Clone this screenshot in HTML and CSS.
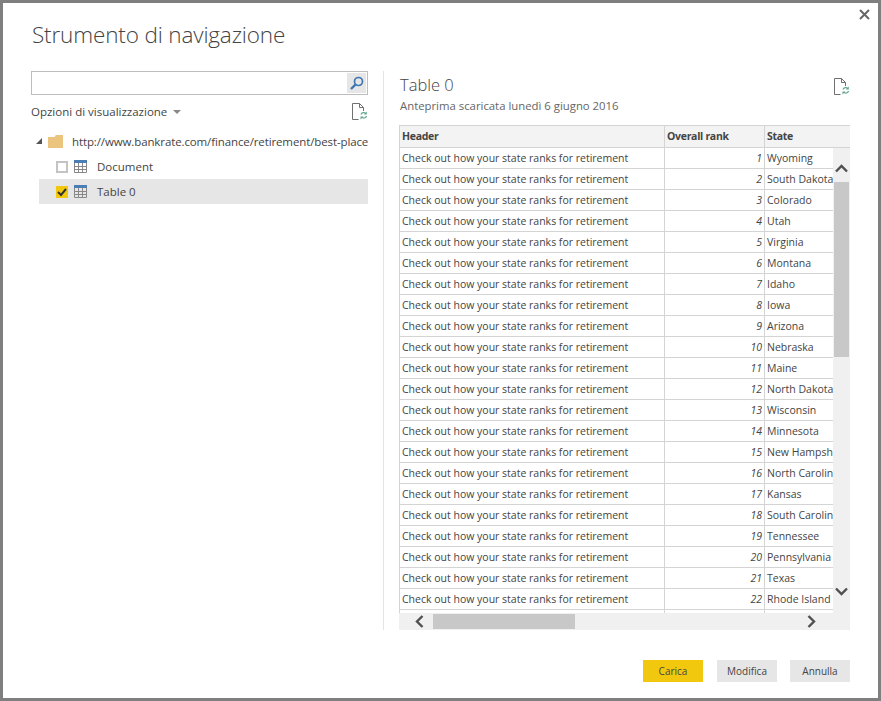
FILE: index.html
```html
<!DOCTYPE html>
<html lang="it">
<head>
    <meta charset="UTF-8">
    <title>Strumento di navigazione</title>
    <link rel="stylesheet" href="styles.css">
</head>
<body>
    <svg width="0" height="0" class="defs">
        <symbol id="doc-refresh" viewBox="0 0 16 17">
            <path d="M6.500 16.500H.5V.5h7l4 4v3.500M7.500.5v4h4" fill="none" stroke="#707070"/>
            <path d="M9 11.500a2.800 2.800 0 0 1 4.700-1M14.500 13a2.800 2.800 0 0 1-4.700 1.200" fill="none" stroke="#62a88e" stroke-width="1.200"/>
            <path d="M14.800 8.500v3h-3zM8.500 16.500v-3h3z" fill="#62a88e"/>
        </symbol>
        <symbol id="table-icon" viewBox="0 0 13 13">
            <rect width="13" height="3" fill="#4a7fb5"/>
            <path d="M.5 3v9.500h12V3M.5 6.500h12M.5 9.500h12M4.500 3v9.500M8.500 3v9.500" fill="none" stroke="#888"/>
        </symbol>
    </svg>

    <div class="dialog">
        <button class="close" aria-label="Chiudi">
            <svg width="11" height="11" viewBox="0 0 11 11"><path d="M1 1l9 9M10 1l-9 9" stroke="#666" stroke-width="2"/></svg>
        </button>
        <h1 class="title">Strumento di navigazione</h1>

        <div class="main">
            <div class="left">
                <div class="search">
                    <input type="text" class="search-input">
                    <span class="search-btn">
                        <svg width="14" height="14" viewBox="0 0 14 14">
                            <circle cx="8.500" cy="5.500" r="4" fill="none" stroke="#3d76b0" stroke-width="1.700"/>
                            <path d="M5.500 8.500L1 13" stroke="#3d76b0" stroke-width="2.400"/>
                        </svg>
                    </span>
                </div>
                <div class="options">
                    <span>Opzioni di visualizzazione</span>
                    <span class="caret"></span>
                    <svg class="refresh-icon" width="16" height="17"><use href="#doc-refresh"/></svg>
                </div>
                <div class="tree">
                    <div class="tree-root">
                        <span class="expander"></span>
                        <svg class="folder" width="15" height="13" viewBox="0 0 15 13">
                            <path d="M0 2h7V1l1-1h7v13H0z" fill="#ebc57f"/>
                        </svg>
                        <span class="url">http://www.bankrate.com/finance/retirement/best-place</span>
                    </div>
                    <div class="tree-item">
                        <span class="check"></span>
                        <svg width="13" height="13"><use href="#table-icon"/></svg>
                        <span>Document</span>
                    </div>
                    <div class="tree-item selected">
                        <span class="check checked">
                            <svg width="12" height="12" viewBox="0 0 12 12"><path d="M2 6l3 3 5-6" fill="none" stroke="#333" stroke-width="2"/></svg>
                        </span>
                        <svg width="13" height="13"><use href="#table-icon"/></svg>
                        <span>Table 0</span>
                    </div>
                </div>
            </div>

            <div class="right">
                <div class="preview-head">
                    <div>
                        <h2 class="preview-title">Table 0</h2>
                        <p class="preview-sub">Anteprima scaricata lunedì 6 giugno 2016</p>
                    </div>
                    <svg class="refresh-icon" width="16" height="17"><use href="#doc-refresh"/></svg>
                </div>

                <div class="grid-wrap">
                    <table class="grid">
                        <thead>
                            <tr><th class="col-a">Header</th><th class="col-b">Overall rank</th><th class="col-c">State</th></tr>
                        </thead>
                        <tbody>
                            <tr><td>Check out how your state ranks for retirement</td><td class="num">1</td><td>Wyoming</td></tr>
                            <tr><td>Check out how your state ranks for retirement</td><td class="num">2</td><td>South Dakota</td></tr>
                            <tr><td>Check out how your state ranks for retirement</td><td class="num">3</td><td>Colorado</td></tr>
                            <tr><td>Check out how your state ranks for retirement</td><td class="num">4</td><td>Utah</td></tr>
                            <tr><td>Check out how your state ranks for retirement</td><td class="num">5</td><td>Virginia</td></tr>
                            <tr><td>Check out how your state ranks for retirement</td><td class="num">6</td><td>Montana</td></tr>
                            <tr><td>Check out how your state ranks for retirement</td><td class="num">7</td><td>Idaho</td></tr>
                            <tr><td>Check out how your state ranks for retirement</td><td class="num">8</td><td>Iowa</td></tr>
                            <tr><td>Check out how your state ranks for retirement</td><td class="num">9</td><td>Arizona</td></tr>
                            <tr><td>Check out how your state ranks for retirement</td><td class="num">10</td><td>Nebraska</td></tr>
                            <tr><td>Check out how your state ranks for retirement</td><td class="num">11</td><td>Maine</td></tr>
                            <tr><td>Check out how your state ranks for retirement</td><td class="num">12</td><td>North Dakota</td></tr>
                            <tr><td>Check out how your state ranks for retirement</td><td class="num">13</td><td>Wisconsin</td></tr>
                            <tr><td>Check out how your state ranks for retirement</td><td class="num">14</td><td>Minnesota</td></tr>
                            <tr><td>Check out how your state ranks for retirement</td><td class="num">15</td><td>New Hampshire</td></tr>
                            <tr><td>Check out how your state ranks for retirement</td><td class="num">16</td><td>North Carolina</td></tr>
                            <tr><td>Check out how your state ranks for retirement</td><td class="num">17</td><td>Kansas</td></tr>
                            <tr><td>Check out how your state ranks for retirement</td><td class="num">18</td><td>South Carolina</td></tr>
                            <tr><td>Check out how your state ranks for retirement</td><td class="num">19</td><td>Tennessee</td></tr>
                            <tr><td>Check out how your state ranks for retirement</td><td class="num">20</td><td>Pennsylvania</td></tr>
                            <tr><td>Check out how your state ranks for retirement</td><td class="num">21</td><td>Texas</td></tr>
                            <tr><td>Check out how your state ranks for retirement</td><td class="num">22</td><td>Rhode Island</td></tr>
                            <tr><td></td><td></td><td></td></tr>
                        </tbody>
                    </table>

                    <div class="vscroll">
                        <svg class="arrow-up" width="13" height="9" viewBox="0 0 13 9"><path d="M1 7.500l5.500-5.500 5.500 5.500" fill="none" stroke="#505050" stroke-width="2.400"/></svg>
                        <span class="vthumb"></span>
                        <svg class="arrow-down" width="13" height="9" viewBox="0 0 13 9"><path d="M1 1.500l5.500 5.500 5.500-5.500" fill="none" stroke="#505050" stroke-width="2.400"/></svg>
                    </div>
                    <div class="hscroll">
                        <svg class="arrow-left" width="9" height="13" viewBox="0 0 9 13"><path d="M7.500 1L2 6.500l5.500 5.500" fill="none" stroke="#505050" stroke-width="2.400"/></svg>
                        <span class="hthumb"></span>
                        <svg class="arrow-right" width="9" height="13" viewBox="0 0 9 13"><path d="M1.500 1L7 6.500 1.500 12" fill="none" stroke="#505050" stroke-width="2.400"/></svg>
                    </div>
                </div>
            </div>
        </div>

        <div class="footer">
            <button class="btn primary">Carica</button>
            <button class="btn">Modifica</button>
            <button class="btn">Annulla</button>
        </div>
    </div>
</body>
</html>
```

FILE: styles.css
```css
* {
    box-sizing: border-box;
}

body {
    margin: 0;
    font-family: "Open Sans", sans-serif;
    color: #444;
    background-color: #fff;
}

.defs {
    position: absolute;
}

.dialog {
    position: relative;
    width: 881px;
    height: 701px;
    border: 3px solid #7f7f7f;
    background-color: #fff;
    overflow: hidden;
}

.close {
    position: absolute;
    top: 6px;
    right: 8px;
    width: 11px;
    height: 11px;
    padding: 0;
    border: none;
    background: none;
    line-height: 0;
}

.title {
    margin: 0;
    padding: 17px 0 0 29px;
    height: 68px;
    font-size: 22.500px;
    font-weight: 300;
    letter-spacing: -0.150px;
    line-height: 30px;
    color: #444;
}

.main {
    display: flex;
    height: 559px;
}

.left {
    flex: none;
    width: 353px;
    margin-left: 28px;
    border-right: 1px solid #e4e4e4;
}

.search {
    display: flex;
    align-items: center;
    width: 337px;
    height: 24px;
    padding-right: 1px;
    border: 1px solid #bdbdbd;
}

.search-input {
    flex: 1;
    min-width: 0;
    height: 20px;
    border: none;
    outline: none;
}

.search-btn {
    display: flex;
    align-items: center;
    justify-content: center;
    width: 19px;
    height: 20px;
    background-color: #e6e6e6;
}

.options {
    display: flex;
    align-items: center;
    width: 337px;
    height: 17px;
    margin-top: 8px;
    font-size: 11.500px;
}

.caret {
    width: 0;
    height: 0;
    margin-left: 6px;
    border-left: 4.500px solid transparent;
    border-right: 4.500px solid transparent;
    border-top: 4.500px solid #888;
}

.options .refresh-icon {
    margin-left: auto;
}

.tree {
    width: 337px;
    margin-top: 11px;
    font-size: 11.500px;
}

.tree-root {
    display: flex;
    align-items: center;
    height: 20px;
    margin-bottom: 3px;
    padding-left: 5px;
    white-space: nowrap;
}

.expander {
    width: 0;
    height: 0;
    flex: none;
    border-left: 6px solid transparent;
    border-bottom: 6px solid #555;
}

.folder {
    flex: none;
    margin-left: 6px;
}

.url {
    margin-left: 9px;
    letter-spacing: -0.115px;
}

.tree-item {
    display: flex;
    align-items: center;
    height: 25px;
    margin-left: 8px;
    padding-left: 17px;
}

.tree-item svg {
    flex: none;
}

.tree-item > span:last-child {
    margin-left: 10px;
}

.tree-item.selected {
    background-color: #e6e6e6;
}

.check {
    display: flex;
    align-items: center;
    justify-content: center;
    width: 12px;
    height: 12px;
    margin-right: 6px;
    border: 2px solid #c4c4c4;
    background-color: #fff;
}

.check.checked {
    border: none;
    background-color: #f2c80f;
}

.right {
    flex: 1;
    padding: 0 27px 0 15px;
}

.preview-head {
    display: flex;
    justify-content: space-between;
    height: 54px;
}

.preview-head .refresh-icon {
    margin: 7px 1px 0 0;
}

.preview-title {
    margin: 1px 0 0 1px;
    font-size: 16.500px;
    font-weight: 300;
    line-height: 26px;
}

.preview-sub {
    margin: 0 0 0 1px;
    font-size: 11.350px;
    line-height: 16px;
    color: #666;
}

.grid-wrap {
    position: relative;
    width: 451px;
    height: 505px;
    overflow: hidden;
}

.grid {
    width: 600px;
    border-collapse: collapse;
    table-layout: fixed;
    font-size: 10.500px;
}

.grid th,
.grid td {
    height: 21px;
    padding: 0 2px;
    border: 1px solid #d4d4d4;
    text-align: left;
    white-space: nowrap;
    overflow: hidden;
}

.grid th {
    height: 22px;
    padding-bottom: 2px;
    background-color: #f3f3f3;
    font-weight: 700;
    letter-spacing: -0.300px;
}

.col-a {
    width: 265px;
}

.col-b {
    width: 100px;
}

.grid td.num {
    text-align: right;
    font-style: italic;
}

.vscroll {
    position: absolute;
    top: 23px;
    right: 0;
    bottom: 17px;
    width: 17px;
    background-color: #f0f0f0;
}

.vthumb {
    position: absolute;
    top: 34px;
    left: 1px;
    width: 15px;
    height: 175px;
    background-color: #c8c8c8;
}

.arrow-up,
.arrow-down {
    position: absolute;
    left: 2px;
}

.arrow-up {
    top: 16px;
}

.arrow-down {
    bottom: 17px;
}

.hscroll {
    position: absolute;
    left: 0;
    right: 0;
    bottom: 0;
    height: 17px;
    background-color: #f0f0f0;
}

.hthumb {
    position: absolute;
    top: 1px;
    left: 34px;
    width: 142px;
    height: 15px;
    background-color: #c8c8c8;
}

.arrow-left,
.arrow-right {
    position: absolute;
    top: 2px;
}

.arrow-left {
    left: 16px;
}

.arrow-right {
    right: 34px;
}

.footer {
    display: flex;
    justify-content: flex-end;
    gap: 13px;
    padding: 30px 28px 0 0;
}

.btn {
    width: 60px;
    height: 22px;
    padding: 0;
    border: none;
    background-color: #e6e6e6;
    font-family: inherit;
    font-size: 10px;
    color: #444;
}

.btn.primary {
    margin-right: 1px;
    background-color: #f2c80f;
}
```
